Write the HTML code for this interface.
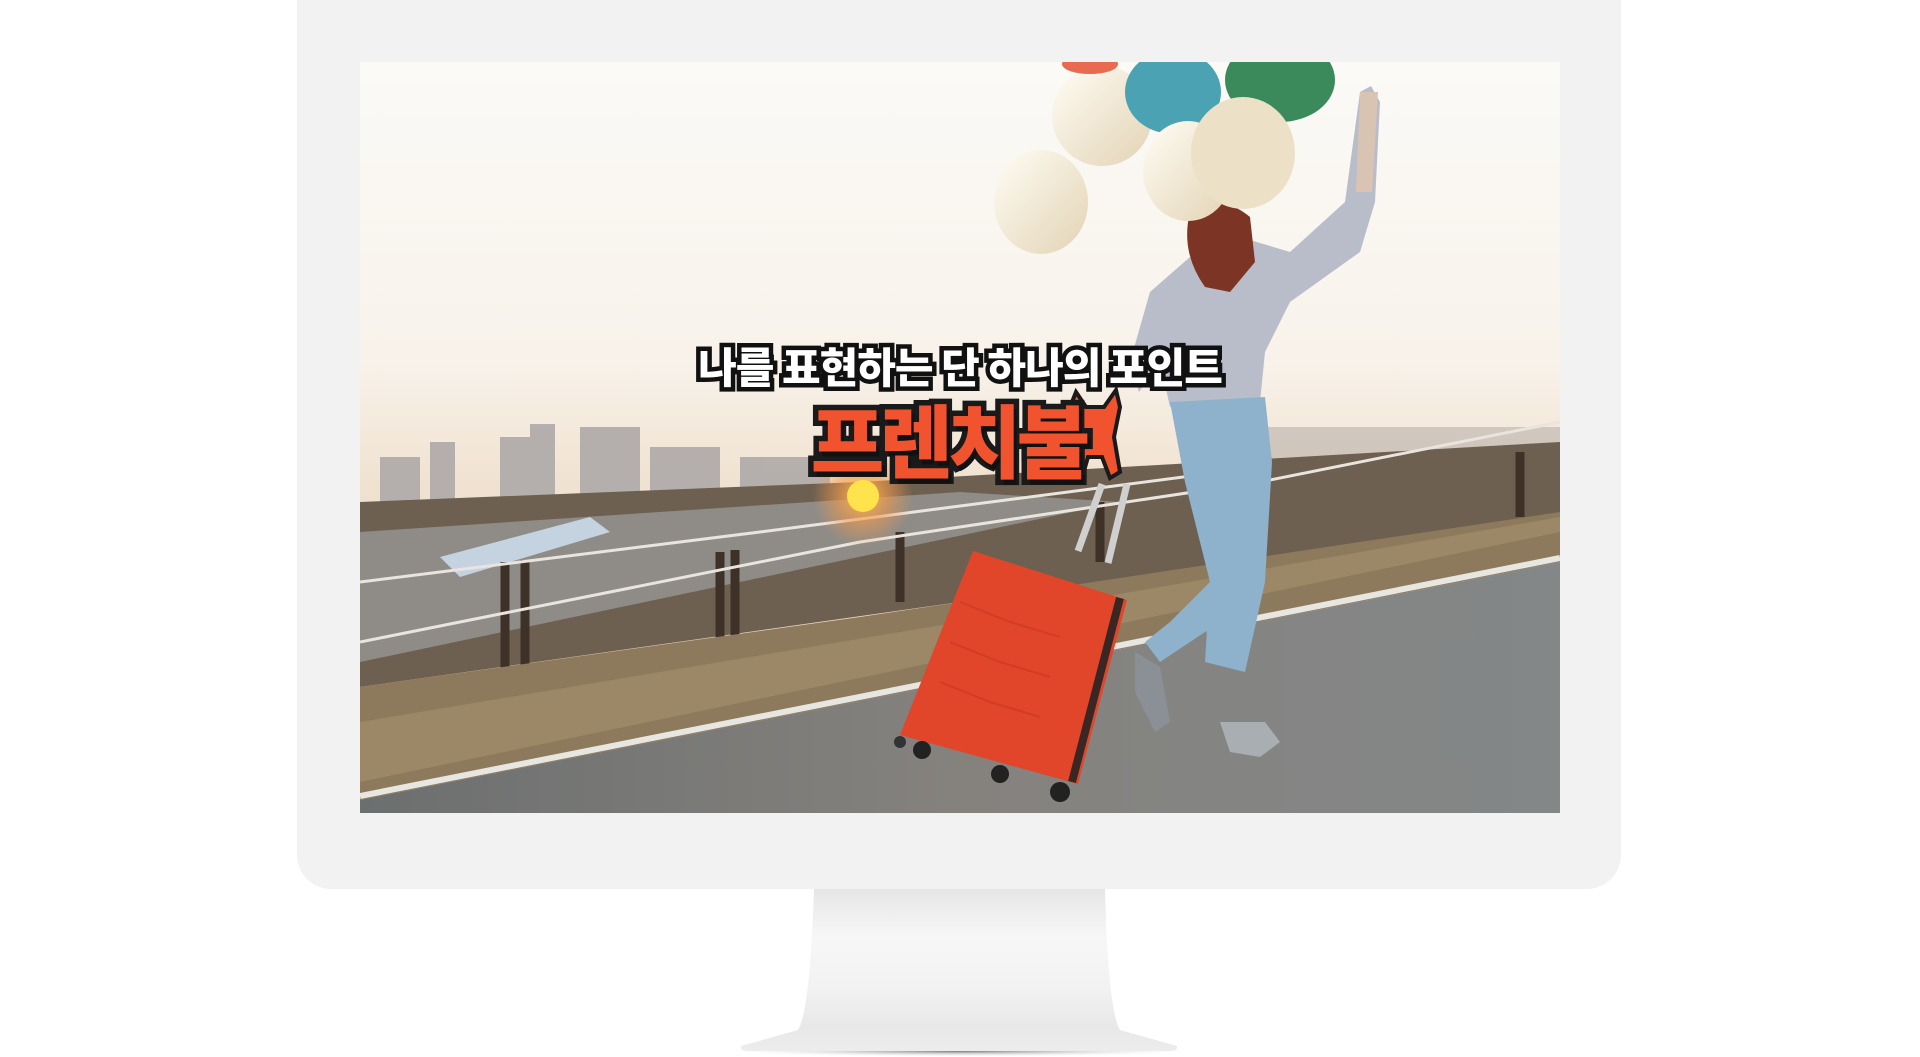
<!DOCTYPE html>
<html><head><meta charset="utf-8"><style>
html,body{margin:0;padding:0;background:#fff;width:1920px;height:1057px;overflow:hidden;position:relative;font-family:"Liberation Sans","Noto Sans CJK KR",sans-serif}
.frame{position:absolute;left:297px;top:0;width:1324px;height:889px;background:#f2f2f2;border-radius:0 0 34px 34px}
.screen{position:absolute;left:360px;top:62px;width:1200px;height:751px;overflow:hidden}
.t1,.t2{position:absolute;left:0;width:100%;text-align:center;font-family:"Noto Sans CJK KR",sans-serif;font-weight:900}
.t1{top:273px;left:0;font-size:42px;color:#fff;-webkit-text-stroke:9px #111;paint-order:stroke fill;text-shadow:3px 4px 0 #111;letter-spacing:-1px}
.t2{top:318px;left:-12px;font-size:80px;color:#f0532e;-webkit-text-stroke:11px #1a1a1a;paint-order:stroke fill;text-shadow:3px 5px 0 #111;letter-spacing:-5px}
</style></head><body>
<div class="frame"></div>
<svg style="position:absolute;left:0;top:0" width="1920" height="1057">
<defs>
<linearGradient id="nk" x1="0" y1="0" x2="0" y2="1">
<stop offset="0" stop-color="#e6e6e6"/><stop offset=".3" stop-color="#f7f7f7"/><stop offset=".6" stop-color="#f2f2f2"/><stop offset=".85" stop-color="#e8e8e8"/><stop offset="1" stop-color="#ececec"/></linearGradient>
<radialGradient id="sh" cx=".5" cy=".5" r=".5"><stop offset="0" stop-color="#777"/><stop offset="1" stop-color="#fff" stop-opacity="0"/></radialGradient>
</defs>
<ellipse cx="960" cy="1051" rx="250" ry="6" fill="url(#sh)"/>
<path d="M814 889 L1105 889 Q1108 1010 1120 1030 L1177 1046 Q1178 1051 1170 1051 L748 1051 Q740 1051 741 1046 L798 1030 Q810 1010 814 889Z" fill="url(#nk)"/>
</svg>
<div class="screen">
<svg width="1200" height="751" viewBox="0 0 1200 751">
<defs>
<linearGradient id="sky" x1="0" y1="0" x2="0" y2="1">
<stop offset="0" stop-color="#fbfaf7"/><stop offset=".4" stop-color="#f8f2ea"/><stop offset=".55" stop-color="#f1e3d2"/><stop offset="1" stop-color="#d8c2a8"/></linearGradient>
<linearGradient id="road" x1="0" y1="0" x2="1" y2="0">
<stop offset="0" stop-color="#6c6f6f"/><stop offset=".5" stop-color="#85827e"/><stop offset="1" stop-color="#838788"/></linearGradient>
<radialGradient id="sun" cx=".5" cy=".5" r=".5"><stop offset="0" stop-color="#ffc040"/><stop offset=".5" stop-color="#f49a4a" stop-opacity=".6"/><stop offset="1" stop-color="#f49a4a" stop-opacity="0"/></radialGradient>
<linearGradient id="bal" x1="0" y1="0" x2="1" y2="1"><stop offset="0" stop-color="#fffdf5"/><stop offset="1" stop-color="#e2d3b4"/></linearGradient>
</defs>
<rect width="1200" height="751" fill="url(#sky)"/>
<!-- city -->
<g fill="#aaa6a6" opacity=".85">
<rect x="20" y="395" width="40" height="50"/><rect x="70" y="380" width="25" height="70"/><rect x="140" y="375" width="30" height="70"/><rect x="170" y="362" width="25" height="80"/><rect x="220" y="365" width="60" height="75"/><rect x="290" y="385" width="70" height="55"/><rect x="380" y="395" width="90" height="45"/>
</g>
<rect x="860" y="365" width="340" height="40" fill="#b9b0aa" opacity=".6"/>
<!-- fence band -->
<path d="M0 440 L500 420 L1200 380 L1200 455 L0 625Z" fill="#6e6050"/>
<path d="M0 470 L600 430 L760 440 L0 600Z" fill="#8f8c87"/>
<path d="M80 495 L230 455 L250 470 L100 515Z" fill="#c5d3e0"/>
<g stroke="#3e3128" stroke-width="9">
<line x1="145" y1="500" x2="145" y2="620"/><line x1="165" y1="498" x2="165" y2="616"/><line x1="360" y1="490" x2="360" y2="585"/><line x1="375" y1="488" x2="375" y2="582"/><line x1="540" y1="470" x2="540" y2="540"/><line x1="740" y1="440" x2="740" y2="500"/><line x1="900" y1="400" x2="900" y2="475"/><line x1="1160" y1="390" x2="1160" y2="455"/></g>
<g stroke="#e9e4de" stroke-width="3" fill="none"><path d="M0 580 L500 480 L900 420 L1200 360"/><path d="M0 520 L400 470 L900 405"/></g>
<!-- grass -->
<path d="M0 625 L500 555 L1200 450 L1200 500 L0 738Z" fill="#8d7a5c"/>
<path d="M0 660 L600 560 L1200 455 L1200 470 L0 720Z" fill="#a38d6c" opacity=".7"/>
<!-- road -->
<path d="M0 738 L1200 500 L1200 751 L0 751Z" fill="url(#road)"/>
<path d="M0 734 L1200 496" stroke="#e8e6e1" stroke-width="6"/>
<circle cx="503" cy="434" r="50" fill="url(#sun)"/>
<circle cx="503" cy="434" r="16" fill="#ffe24c"/>
<!-- person -->
<path d="M1011 24 L1000 30 L985 140 L930 190 L880 175 L830 195 L790 230 L770 300 L779 330 L800 300 L810 345 L900 340 L905 290 L930 240 L1000 190 L1015 140 L1020 40Z" fill="#b9bdc9"/>
<path d="M1000 30 L1018 30 L1012 130 L996 130Z" fill="#d9c4b3"/>
<path d="M830 150 Q860 130 890 155 L895 200 L870 230 L845 225 Q820 190 830 150Z" fill="#7c3524"/>
<path d="M810 340 L905 335 L912 400 L905 520 L885 610 L845 600 L850 520 L825 420Z" fill="#8fb2cc"/>
<path d="M850 520 L810 560 L785 580 L800 600 L860 560Z" fill="#8fb2cc"/>
<path d="M775 590 L800 605 L810 660 L795 670 L775 630Z" fill="#8b9096"/>
<path d="M860 660 L905 660 L920 680 L900 695 L870 690Z" fill="#a9aeb3"/>
<!-- suitcase -->
<path d="M742 422 L718 489 M767 422 L748 501" stroke="#cfcfcf" stroke-width="7"/>
<path d="M613 489 L767 538 L718 722 L540 673Z" fill="#e1462a"/>
<path d="M760 536 L712 720" stroke="#3a2622" stroke-width="8"/>
<g stroke="#c93a22" stroke-width="2" fill="none" opacity=".7"><path d="M600 540 L650 560 L700 575"/><path d="M590 580 L640 600 L690 615"/><path d="M580 620 L630 640 L680 655"/></g>
<circle cx="562" cy="688" r="9" fill="#222"/><circle cx="640" cy="712" r="9" fill="#222"/><circle cx="700" cy="730" r="10" fill="#222"/><circle cx="540" cy="680" r="6" fill="#333"/>
<!-- balloons -->
<ellipse cx="681" cy="140" rx="47" ry="52" fill="url(#bal)"/>
<ellipse cx="742" cy="54" rx="50" ry="50" fill="url(#bal)"/>
<ellipse cx="813" cy="30" rx="48" ry="42" fill="#4aa2b2"/>
<ellipse cx="920" cy="18" rx="55" ry="42" fill="#3b8a5c"/>
<ellipse cx="828" cy="109" rx="45" ry="50" fill="url(#bal)"/>
<ellipse cx="883" cy="91" rx="52" ry="56" fill="#ece1c6"/>
<ellipse cx="730" cy="2" rx="28" ry="10" fill="#e86a50"/>
<!-- dog -->
<path d="M716 330 L726 345 L744 345 L756 328 L760 345 L754 375 L760 410 L750 416 L742 395 L728 395 L722 416 L712 412 L718 375 L710 345Z" fill="#f0532e" stroke="#1a1a1a" stroke-width="4"/>
</svg>
<div class="t1">나를 표현하는 단 하나의 포인트</div>
<div class="t2">프렌치불</div>
</div>
</body></html>
